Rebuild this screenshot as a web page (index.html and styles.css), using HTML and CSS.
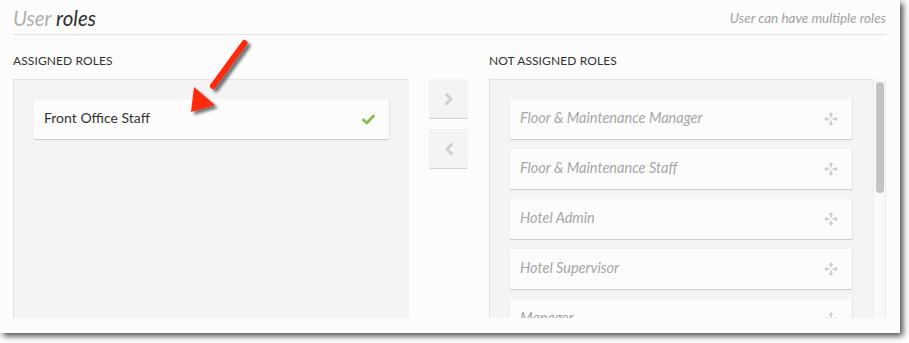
FILE: index.html
```html
<!DOCTYPE html>
<html>
<head>
<meta charset="utf-8">
<link rel="stylesheet" href="styles.css">
</head>
<body>
<div class="frame">
  <div class="header">
    <h1 class="title"><span class="title-light">User</span> roles</h1>
    <div class="hint">User can have multiple roles</div>
  </div>
  <div class="columns">
    <div class="col col-left">
      <div class="label">Assigned roles</div>
      <div class="panel">
        <div class="card card-active">
          <span class="card-text">Front Office Staff</span>
          <svg class="check" width="13" height="11" viewBox="0 0 13 11"><path d="M1.5 6 L4.8 9 L11.5 2" fill="none" stroke="#84bd4c" stroke-width="2.8" stroke-linecap="round" stroke-linejoin="round"/></svg>
        </div>
      </div>
    </div>
    <div class="col col-mid">
      <div class="label"></div>
      <div class="btns">
        <div class="btn"><svg width="10" height="14" viewBox="0 0 10 14"><path d="M2.5 2.5 L7 7 L2.5 11.5" fill="none" stroke="#cfcfcf" stroke-width="3" stroke-linecap="round" stroke-linejoin="round"/></svg></div>
        <div class="btn"><svg width="10" height="14" viewBox="0 0 10 14"><path d="M7.5 2.5 L3 7 L7.5 11.5" fill="none" stroke="#cfcfcf" stroke-width="3" stroke-linecap="round" stroke-linejoin="round"/></svg></div>
      </div>
    </div>
    <div class="col col-right">
      <div class="label">Not assigned roles</div>
      <div class="panel-wrap">
        <div class="panel panel-list">
          <div class="card"><span class="card-text muted">Floor &amp; Maintenance Manager</span><svg class="move" width="16" height="16" viewBox="0 0 16 16"><g fill="#cdcdcd"><path d="M8 1 L10.5 4 L5.5 4 Z"/><path d="M8 15 L10.5 12 L5.5 12 Z"/><path d="M1 8 L4 5.5 L4 10.5 Z"/><path d="M15 8 L12 5.5 L12 10.5 Z"/><rect x="7.2" y="4" width="1.6" height="2.5"/><rect x="7.2" y="9.5" width="1.6" height="2.5"/><rect x="4" y="7.2" width="2.5" height="1.6"/><rect x="9.5" y="7.2" width="2.5" height="1.6"/></g></svg></div>
          <div class="card"><span class="card-text muted">Floor &amp; Maintenance Staff</span><svg class="move" width="16" height="16" viewBox="0 0 16 16"><g fill="#cdcdcd"><path d="M8 1 L10.5 4 L5.5 4 Z"/><path d="M8 15 L10.5 12 L5.5 12 Z"/><path d="M1 8 L4 5.5 L4 10.5 Z"/><path d="M15 8 L12 5.5 L12 10.5 Z"/><rect x="7.2" y="4" width="1.6" height="2.5"/><rect x="7.2" y="9.5" width="1.6" height="2.5"/><rect x="4" y="7.2" width="2.5" height="1.6"/><rect x="9.5" y="7.2" width="2.5" height="1.6"/></g></svg></div>
          <div class="card"><span class="card-text muted">Hotel Admin</span><svg class="move" width="16" height="16" viewBox="0 0 16 16"><g fill="#cdcdcd"><path d="M8 1 L10.5 4 L5.5 4 Z"/><path d="M8 15 L10.5 12 L5.5 12 Z"/><path d="M1 8 L4 5.5 L4 10.5 Z"/><path d="M15 8 L12 5.5 L12 10.5 Z"/><rect x="7.2" y="4" width="1.6" height="2.5"/><rect x="7.2" y="9.5" width="1.6" height="2.5"/><rect x="4" y="7.2" width="2.5" height="1.6"/><rect x="9.5" y="7.2" width="2.5" height="1.6"/></g></svg></div>
          <div class="card"><span class="card-text muted">Hotel Supervisor</span><svg class="move" width="16" height="16" viewBox="0 0 16 16"><g fill="#cdcdcd"><path d="M8 1 L10.5 4 L5.5 4 Z"/><path d="M8 15 L10.5 12 L5.5 12 Z"/><path d="M1 8 L4 5.5 L4 10.5 Z"/><path d="M15 8 L12 5.5 L12 10.5 Z"/><rect x="7.2" y="4" width="1.6" height="2.5"/><rect x="7.2" y="9.5" width="1.6" height="2.5"/><rect x="4" y="7.2" width="2.5" height="1.6"/><rect x="9.5" y="7.2" width="2.5" height="1.6"/></g></svg></div>
          <div class="card"><span class="card-text muted">Manager</span><svg class="move" width="16" height="16" viewBox="0 0 16 16"><g fill="#cdcdcd"><path d="M8 1 L10.5 4 L5.5 4 Z"/><path d="M8 15 L10.5 12 L5.5 12 Z"/><path d="M1 8 L4 5.5 L4 10.5 Z"/><path d="M15 8 L12 5.5 L12 10.5 Z"/><rect x="7.2" y="4" width="1.6" height="2.5"/><rect x="7.2" y="9.5" width="1.6" height="2.5"/><rect x="4" y="7.2" width="2.5" height="1.6"/><rect x="9.5" y="7.2" width="2.5" height="1.6"/></g></svg></div>
        </div>
        <div class="scrollbar"><div class="thumb"></div></div>
      </div>
    </div>
  </div>
  <svg class="annot" width="80" height="90" viewBox="0 0 80 90">
    <defs>
      <filter id="sh" x="-30%" y="-30%" width="160%" height="160%">
        <feGaussianBlur in="SourceAlpha" stdDeviation="1.5"/>
        <feOffset dx="3" dy="3" result="b"/>
        <feComponentTransfer><feFuncA type="linear" slope="0.55"/></feComponentTransfer>
        <feMerge><feMergeNode/><feMergeNode in="SourceGraphic"/></feMerge>
      </filter>
    </defs>
    <g filter="url(#sh)" fill="#ff2a0a" stroke="none">
      <path d="M64.5 8 L33 51" stroke="#ff2a0a" stroke-width="6" stroke-linecap="round"/>
      <path d="M11 77 L14 52 L35 70 Z"/>
    </g>
  </svg>
</div>
</body>
</html>
```

FILE: styles.css
```css
html, body {
  margin: 0;
  padding: 0;
  background: #ffffff;
}

body {
  width: 909px;
  height: 343px;
  overflow: hidden;
  font-family: Lato, "Open Sans", sans-serif;
}

.frame {
  position: relative;
  width: 900px;
  height: 333px;
  box-sizing: border-box;
  padding: 0 14px 0 13px;
  background: #fcfcfc;
  box-shadow: 3px 3px 6px rgba(0, 0, 0, 0.7);
}

.header {
  height: 34px;
  display: flex;
  justify-content: space-between;
  align-items: flex-end;
  border-bottom: 1px solid #e2e2e2;
}

.title {
  margin: 0 0 4px 0;
  font-size: 20.5px;
  font-weight: 400;
  font-style: italic;
  line-height: 24px;
  color: #2e2e2e;
}

.title-light {
  color: #b0b0b0;
}

.hint {
  margin-bottom: 8px;
  font-size: 13.5px;
  font-style: italic;
  color: #a2a2a2;
  line-height: 16px;
}

.columns {
  display: flex;
}

.col-left {
  width: 396px;
}

.col-mid {
  width: 39px;
  margin: 0 21px 0 20px;
}

.col-right {
  flex: 1;
}

.label {
  height: 44px;
  box-sizing: border-box;
  padding-top: 19px;
  font-size: 12px;
  line-height: 14px;
  text-transform: uppercase;
  color: #333333;
  letter-spacing: 0.1px;
}

.panel {
  height: 239px;
  box-sizing: border-box;
  padding: 19px 20px 0 20px;
  background: #f4f4f4;
  border-top: 1px solid #e4e4e4;
  border-left: 1px solid #e0e0e0;
  overflow: hidden;
}

.card {
  height: 40px;
  box-sizing: border-box;
  margin-bottom: 10px;
  padding: 0 14px 3px 10px;
  display: flex;
  align-items: center;
  justify-content: space-between;
  background: #fcfcfc;
  box-shadow: 0 1px 1px rgba(0, 0, 0, 0.18), 1px 0 1px rgba(0, 0, 0, 0.06);
  border-radius: 1px;
}

.card-text {
  font-size: 14px;
  color: #333333;
}

.card-text.muted {
  font-size: 14.5px;
  color: #a6a6a6;
  font-style: italic;
}

.check {
  display: block;
  margin-top: 3px;
}

.move {
  display: block;
  margin-right: -1px;
  margin-top: 3px;
}

.btns {
  display: flex;
  flex-direction: column;
  gap: 11px;
}

.btn {
  height: 39px;
  display: flex;
  align-items: center;
  justify-content: center;
  background: #f4f4f4;
  border-radius: 2px;
  box-shadow: 0 1px 0 #d0d0d0;
}

.panel-wrap {
  display: flex;
  height: 239px;
}

.panel-list {
  flex: 1;
  padding-right: 21px;
}

.scrollbar {
  width: 13px;
  box-sizing: border-box;
  border-left: 1px solid #ececec;
  border-right: 1px solid #ececec;
  background: #f9f9f9;
  padding: 3px 1px 0 2px;
}

.thumb {
  height: 111px;
  border-radius: 5px;
  background: #c3c3c3;
}

.annot {
  position: absolute;
  left: 180px;
  top: 35px;
  pointer-events: none;
}
```
